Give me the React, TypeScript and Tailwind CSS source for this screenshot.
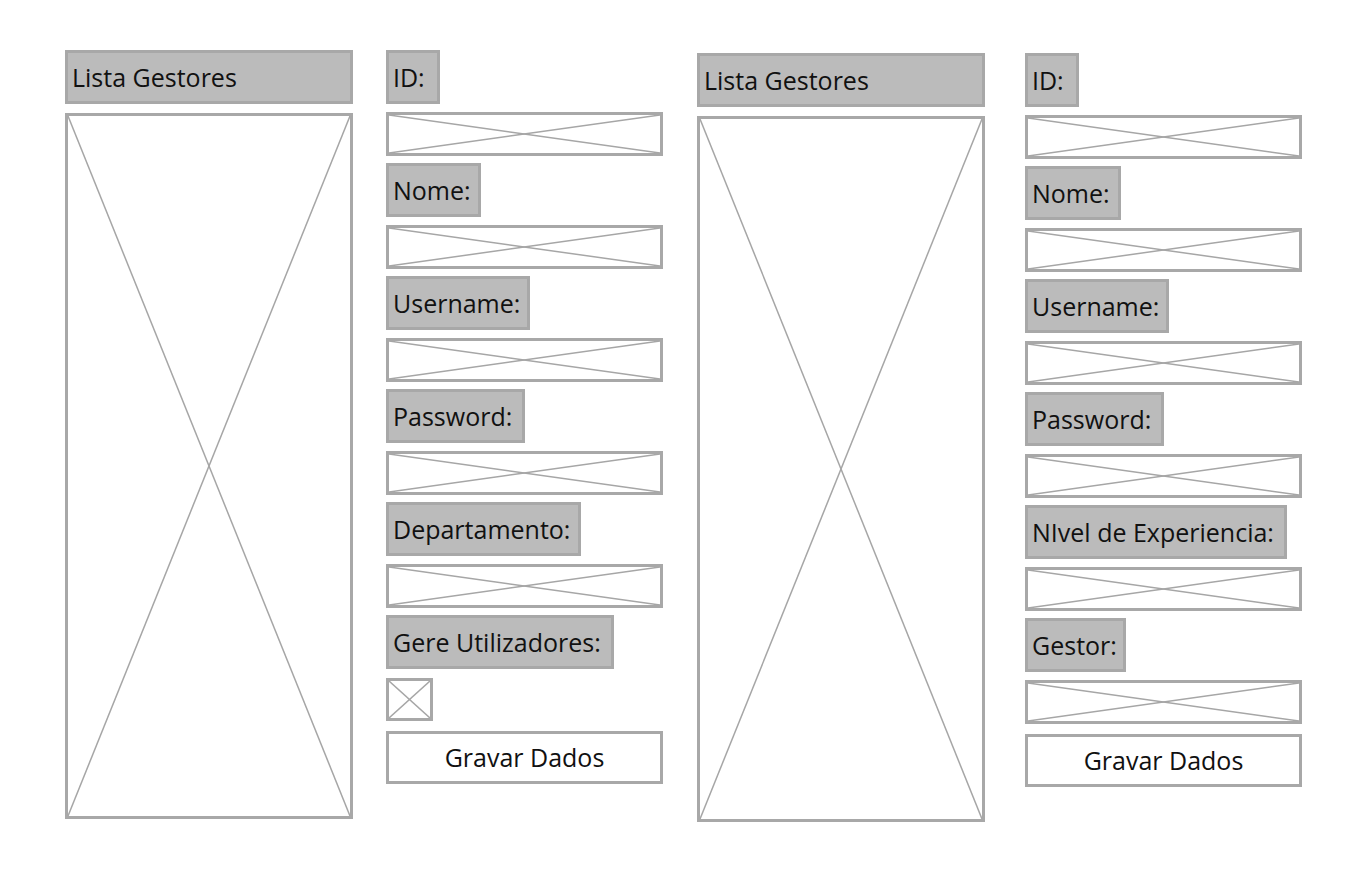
import React from "react";

const font = { fontFamily: '"Open Sans", "Noto Sans", sans-serif' };

function Cross() {
  return (
    <svg className="absolute inset-0 h-full w-full" viewBox="0 0 100 100" preserveAspectRatio="none">
      <line x1="0" y1="0" x2="100" y2="100" stroke="#a6a6a6" strokeWidth="1.5" vectorEffect="non-scaling-stroke" />
      <line x1="100" y1="0" x2="0" y2="100" stroke="#a6a6a6" strokeWidth="1.5" vectorEffect="non-scaling-stroke" />
    </svg>
  );
}

function Label({ text, w }: { text: string; w: string }) {
  return (
    <div className={`flex h-[54px] shrink-0 items-center border-[3px] border-[#a8a8a8] bg-[#bbbbbb] pl-[4px] text-[25px] text-[#111111] ${w}`}>
      <span className="leading-none">{text}</span>
    </div>
  );
}

function Input() {
  return (
    <div className="relative mt-[8px] h-[44px] w-full border-[3px] border-[#a8a8a8] bg-white">
      <Cross />
    </div>
  );
}

function Button() {
  return (
    <div className="mt-[10px] flex h-[53px] w-full items-center justify-center border-[3px] border-[#a8a8a8] bg-white text-[25px] text-[#111111]">
      Gravar Dados
    </div>
  );
}

function List() {
  return (
    <div className="flex w-[288px] flex-col gap-[9px]">
      <Label text="Lista Gestores" w="w-full" />
      <div className="relative h-[706px] w-full border-[3px] border-[#a8a8a8] bg-white">
        <Cross />
      </div>
    </div>
  );
}

function Field({ text, w, first }: { text: string; w: string; first?: boolean }) {
  return (
    <div className={`flex flex-col ${first ? "" : "mt-[7px]"}`}>
      <Label text={text} w={w} />
      <Input />
    </div>
  );
}

export default function App() {
  return (
    <div className="min-h-[873px] w-[1366px] bg-white" style={font}>
      <div className="flex items-start pl-[65px] pt-[50px]">
        <div className="flex items-start gap-[33px]">
          <List />
          <div className="flex w-[277px] flex-col">
            <Field text="ID:" w="w-[54px]" first />
            <Field text="Nome:" w="w-[95px]" />
            <Field text="Username:" w="w-[144px]" />
            <Field text="Password:" w="w-[139px]" />
            <Field text="Departamento:" w="w-[195px]" />
            <div className="mt-[7px] flex flex-col">
              <Label text="Gere Utilizadores:" w="w-[228px]" />
            </div>
            <div className="relative mt-[9px] h-[43px] w-[47px] border-[3px] border-[#a8a8a8] bg-white">
              <Cross />
            </div>
            <Button />
          </div>
        </div>
        <div className="ml-[34px] mt-[3px] flex items-start gap-[40px]">
          <List />
          <div className="flex w-[277px] flex-col">
            <Field text="ID:" w="w-[54px]" first />
            <Field text="Nome:" w="w-[96px]" />
            <Field text="Username:" w="w-[144px]" />
            <Field text="Password:" w="w-[139px]" />
            <Field text="NIvel de Experiencia:" w="w-[262px]" />
            <Field text="Gestor:" w="w-[101px]" />
            <Button />
          </div>
        </div>
      </div>
    </div>
  );
}
